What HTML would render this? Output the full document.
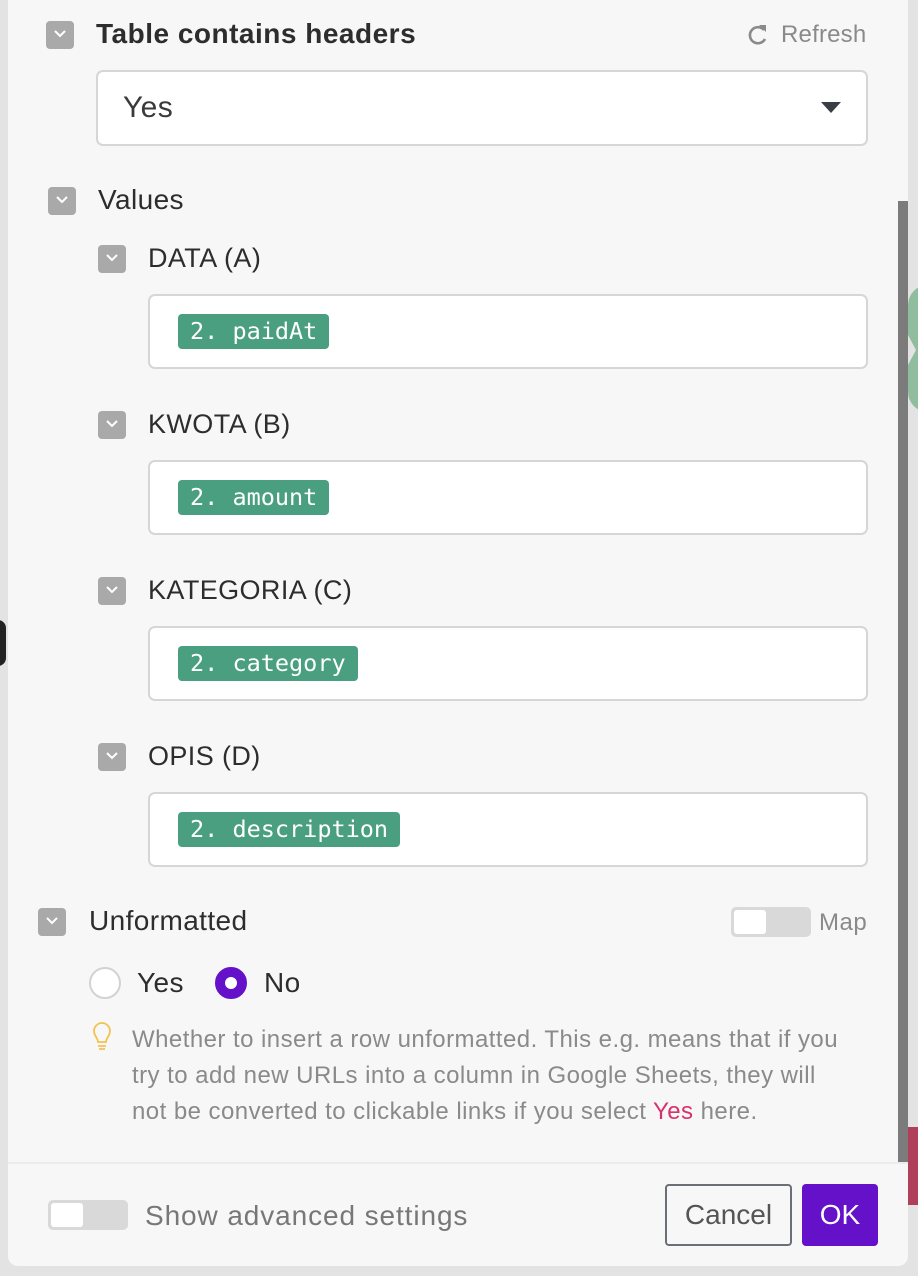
<!DOCTYPE html>
<html><head><meta charset="utf-8"><style>
*{box-sizing:border-box;margin:0;padding:0}
body{width:918px;height:1276px;background:#e3e3e3;position:relative;overflow:hidden;font-family:"Liberation Sans",sans-serif;color:#2d2d2d}
.panel{position:absolute;left:8px;top:-10px;width:900px;height:1276px;background:#f7f7f7;border-radius:0 0 10px 10px}
.a{position:absolute}
.cb{position:absolute;width:28px;height:28px;background:#a9a9a9;border-radius:4px}
.cb svg{position:absolute;left:7px;top:8px}
.lbl{position:absolute;font-size:27px;letter-spacing:0.4px;line-height:30px;color:#2d2d2d;white-space:nowrap}
.box{position:absolute;left:148px;width:720px;height:75px;background:#fff;border:2px solid #d6d6d6;border-radius:7px}
.pill{position:absolute;left:28px;top:18px;height:35px;background:#4a9f80;color:#fff;border-radius:4px;font-family:"DejaVu Sans Mono","Liberation Mono",monospace;font-size:23.5px;line-height:35px;padding:0 12px}
</style></head><body>
<div class="a" style="left:908px;top:285px;width:20px;height:127px;background:#91bd9f;border-radius:60px 0 0 60px"></div>
<div class="a" style="left:908px;top:335px;width:8px;height:30px;background:#e3e3e3;clip-path:polygon(0 0,100% 50%,0 100%)"></div>
<div class="a" style="left:908px;top:1127px;width:10px;height:78px;background:#b0405a"></div>
<div class="a" style="left:-10px;top:620px;width:16px;height:46px;background:#222;border-radius:8px"></div>
<div class="panel"></div>
<div class="a" style="left:898px;top:201px;width:10px;height:961px;background:#7b7b7b"></div>

<div class="cb" style="left:46px;top:21px"><svg width="14" height="10"><path d="M2 2l5 5 5-5" stroke="#fff" stroke-width="2" fill="none"/></svg></div>
<div class="lbl" style="left:96px;top:19px;font-weight:bold;font-size:28px;letter-spacing:0.5px">Table contains headers</div>
<svg class="a" style="left:747px;top:23px" width="22" height="24" viewBox="0 0 22 24"><path d="M17 7A8 8 0 1 0 18 16" stroke="#8a8a8a" stroke-width="2.6" fill="none"/><path d="M12 2l7 0 0 7z" fill="#8a8a8a"/></svg>
<div class="lbl" style="left:781px;top:20px;font-size:24px;letter-spacing:0.2px;color:#8a8a8a">Refresh</div>
<div class="a" style="left:96px;top:70px;width:772px;height:76px;background:#fff;border:2px solid #d6d6d6;border-radius:7px"></div>
<div class="lbl" style="left:123px;top:93px;font-size:30px;color:#3a3a3a">Yes</div>
<div class="a" style="left:821px;top:102px;width:0;height:0;border-left:10px solid transparent;border-right:10px solid transparent;border-top:11px solid #3a3d44"></div>

<div class="cb" style="left:48px;top:187px"><svg width="14" height="10"><path d="M2 2l5 5 5-5" stroke="#fff" stroke-width="2" fill="none"/></svg></div>
<div class="lbl" style="left:98px;top:185px;font-size:28px">Values</div>

<div class="cb" style="left:98px;top:245px"><svg width="14" height="10"><path d="M2 2l5 5 5-5" stroke="#fff" stroke-width="2" fill="none"/></svg></div>
<div class="lbl" style="left:148px;top:243px">DATA (A)</div>
<div class="box" style="top:294px"><div class="pill">2. paidAt</div></div>

<div class="cb" style="left:98px;top:411px"><svg width="14" height="10"><path d="M2 2l5 5 5-5" stroke="#fff" stroke-width="2" fill="none"/></svg></div>
<div class="lbl" style="left:148px;top:409px">KWOTA (B)</div>
<div class="box" style="top:460px"><div class="pill">2. amount</div></div>

<div class="cb" style="left:98px;top:577px"><svg width="14" height="10"><path d="M2 2l5 5 5-5" stroke="#fff" stroke-width="2" fill="none"/></svg></div>
<div class="lbl" style="left:148px;top:575px">KATEGORIA (C)</div>
<div class="box" style="top:626px"><div class="pill">2. category</div></div>

<div class="cb" style="left:98px;top:743px"><svg width="14" height="10"><path d="M2 2l5 5 5-5" stroke="#fff" stroke-width="2" fill="none"/></svg></div>
<div class="lbl" style="left:148px;top:741px">OPIS (D)</div>
<div class="box" style="top:792px"><div class="pill">2. description</div></div>

<div class="cb" style="left:38px;top:908px"><svg width="14" height="10"><path d="M2 2l5 5 5-5" stroke="#fff" stroke-width="2" fill="none"/></svg></div>
<div class="lbl" style="left:89px;top:906px;font-size:28px">Unformatted</div>
<div class="a" style="left:731px;top:907px;width:80px;height:30px;background:#d9d9d9;border-radius:5px"></div>
<div class="a" style="left:734px;top:910px;width:32px;height:24px;background:#fff;border-radius:3px"></div>
<div class="lbl" style="left:819px;top:908px;font-size:24px;letter-spacing:0.5px;color:#8a8a8a">Map</div>

<div class="a" style="left:89px;top:967px;width:32px;height:32px;border:2px solid #d2d2d2;border-radius:50%;background:#fff"></div>
<div class="lbl" style="left:137px;top:968px;font-size:28px">Yes</div>
<div class="a" style="left:215px;top:967px;width:32px;height:32px;border:10px solid #6411c9;border-radius:50%;background:#fff"></div>
<div class="lbl" style="left:264px;top:968px;font-size:28px">No</div>

<svg class="a" style="left:91px;top:1022px" width="22" height="30" viewBox="0 0 22 30"><path d="M7 20C7 16 3 14 3 9a8 8 0 0 1 16 0c0 5-4 7-4 11z M7 24h8 M8 27h6" stroke="#f3c24f" stroke-width="1.8" fill="none"/></svg>
<div class="a" style="left:132px;top:1022px;width:780px;font-size:24px;letter-spacing:0.45px;line-height:36px;color:#8a8a8a;white-space:nowrap">Whether to insert a row unformatted. This e.g. means that if you<br>try to add new URLs into a column in Google Sheets, they will<br>not be converted to clickable links if you select <span style="color:#d6336c">Yes</span> here.</div>

<div class="a" style="left:8px;top:1162px;width:900px;height:2px;background:#ececec"></div>
<div class="a" style="left:48px;top:1200px;width:80px;height:30px;background:#d9d9d9;border-radius:5px"></div>
<div class="a" style="left:51px;top:1203px;width:32px;height:24px;background:#fff;border-radius:3px"></div>
<div class="lbl" style="left:145px;top:1201px;color:#777;font-size:28px;letter-spacing:0.9px">Show advanced settings</div>
<div class="a" style="left:665px;top:1184px;width:127px;height:62px;border:2px solid #6b6f78;border-radius:4px;font-size:28px;line-height:58px;text-align:center;color:#555">Cancel</div>
<div class="a" style="left:802px;top:1184px;width:76px;height:62px;background:#6411c9;border-radius:4px;font-size:28px;line-height:62px;text-align:center;color:#fff">OK</div>
</body></html>
